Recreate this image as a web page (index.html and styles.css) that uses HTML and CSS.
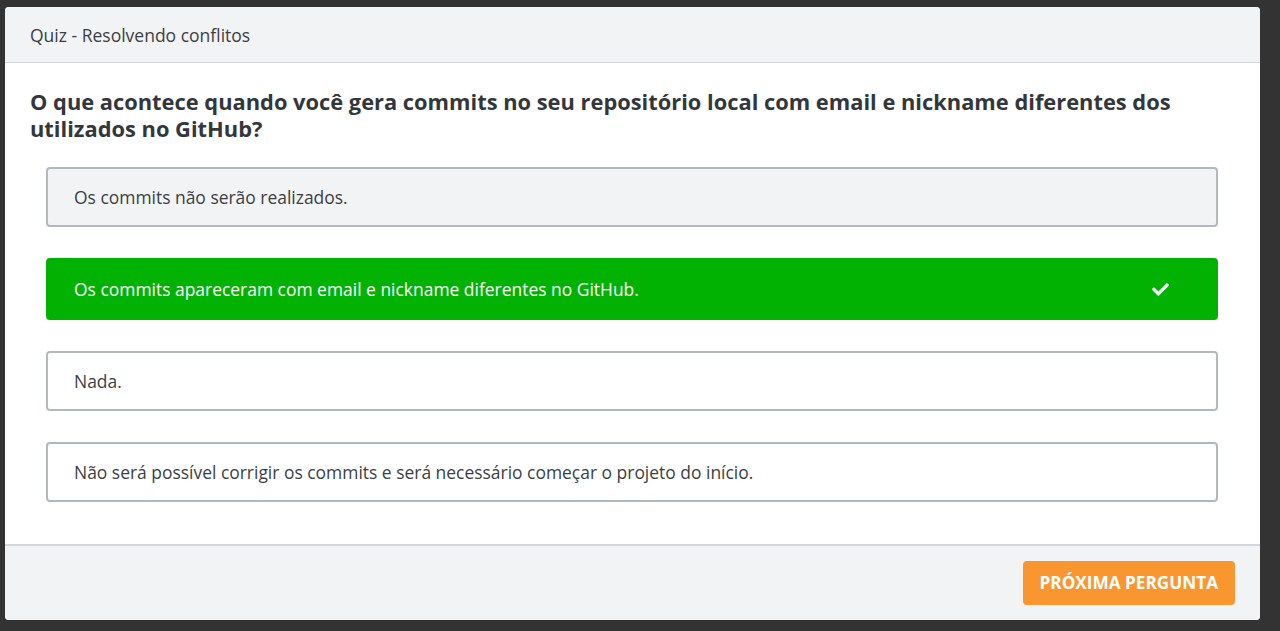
FILE: index.html
```html
<!DOCTYPE html>
<html lang="pt-BR">
<head>
<meta charset="utf-8">
<title>Quiz - Resolvendo conflitos</title>
<link rel="stylesheet" href="styles.css">
</head>
<body>
<div class="modal">
  <div class="modal-header">Quiz - Resolvendo conflitos</div>
  <div class="modal-body">
    <h2 class="question">O que acontece quando você gera commits no seu repositório local com email e nickname diferentes dos utilizados no GitHub?</h2>
    <ul class="options">
      <li class="option option-muted">Os commits não serão realizados.</li>
      <li class="option option-correct">
        <span>Os commits apareceram com email e nickname diferentes no GitHub.</span>
        <svg class="check" viewBox="0 0 512 512" width="17" height="17"><path fill="#fff" d="M173.9 439.4L7.5 273c-10-10-10-26.2 0-36.2l36.2-36.2c10-10 26.2-10 36.2 0L192 312.7 432.1 72.6c10-10 26.2-10 36.2 0l36.2 36.2c10 10 10 26.2 0 36.2L210.1 439.4c-10 10-26.2 10-36.2 0z"/></svg>
      </li>
      <li class="option">Nada.</li>
      <li class="option">Não será possível corrigir os commits e será necessário começar o projeto do início.</li>
    </ul>
  </div>
  <div class="modal-footer">
    <button class="btn-next">PRÓXIMA PERGUNTA</button>
  </div>
</div>
</body>
</html>
```
FILE: styles.css
```css
html, body {
  margin: 0;
  height: 100%;
}
body {
  background: #333333;
  font-family: "Open Sans", "Noto Sans", sans-serif;
  color: #3b3f44;
  padding: 7px 20px 11px 5px;
  box-sizing: border-box;
}
.modal {
  background: #ffffff;
  border-radius: 4px;
  height: 613px;
  display: flex;
  flex-direction: column;
  overflow: hidden;
}
.modal-header {
  background: #f2f3f5;
  border-bottom: 1px solid #d3d6da;
  height: 55px;
  display: flex;
  align-items: center;
  padding-left: 25px;
  font-size: 17.5px;
  flex-shrink: 0;
}
.modal-body {
  flex: 1;
  padding: 25px 25px 0 25px;
}
.question {
  margin: 0;
  font-size: 21.85px;
  font-weight: 700;
  line-height: 27px;
  color: #33373c;
}
.options {
  list-style: none;
  margin: 25px 0 0 0;
  padding: 0 17px 0 16px;
  display: flex;
  flex-direction: column;
  gap: 31px;
}
.option {
  height: 60px;
  box-sizing: border-box;
  border: 2px solid #b2b8be;
  border-radius: 4px;
  padding: 0 26px;
  display: flex;
  align-items: center;
  font-size: 17.45px;
  color: #3b3f44;
  background: #ffffff;
}
.option-muted {
  background: #f2f3f5;
}
.option-correct {
  height: 62px;
  background: #02b202;
  border-color: #02b202;
  color: #ffffff;
  justify-content: space-between;
  padding-right: 47px;
}
.check {
  display: block;
}
.modal-footer {
  background: #f2f3f5;
  border-top: 2px solid #d3d6da;
  height: 74px;
  flex-shrink: 0;
  display: flex;
  align-items: center;
  justify-content: flex-end;
  padding-right: 25px;
}
.btn-next {
  background: #f9962f;
  color: #ffffff;
  border: none;
  border-radius: 4px;
  height: 44px;
  padding: 0 17px;
  font-family: "Open Sans", "Noto Sans", sans-serif;
  font-weight: 700;
  font-size: 17.2px;
  margin-top: -1px;
}
```
